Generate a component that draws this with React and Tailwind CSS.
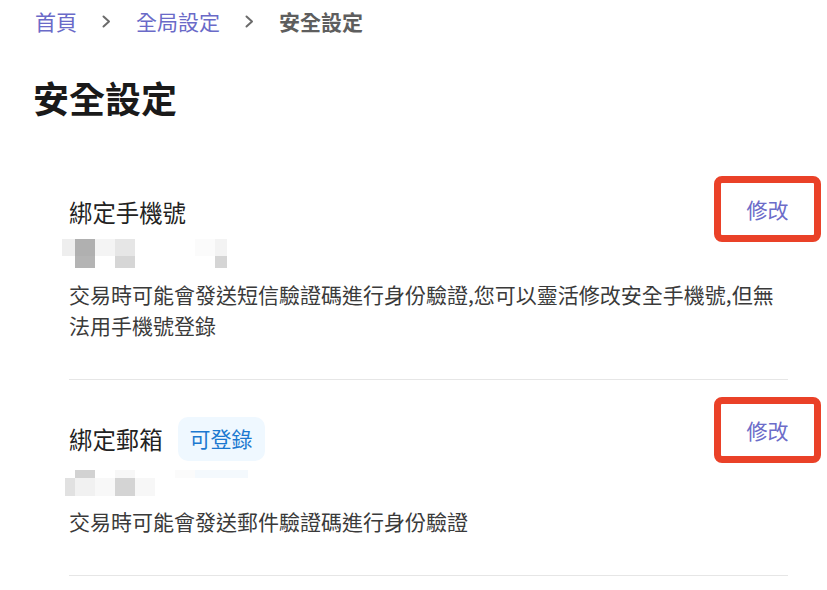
import React from "react";

const font = { fontFamily: '"Noto Sans CJK TC", "Noto Sans", sans-serif' };

function Chevron() {
  return (
    <svg width="9" height="13" viewBox="0 0 9 13" className="shrink-0">
      <path d="M1.5 1.5 L7 6.5 L1.5 11.5" fill="none" stroke="#6b6b6b" strokeWidth="2" strokeLinecap="round" strokeLinejoin="round" />
    </svg>
  );
}

function Blocks({ rows }) {
  return (
    <div className="flex flex-col">
      {rows.map((r, i) => (
        <div key={i} className="flex" style={{ height: r.h }}>
          {r.cells.map((c, j) => (
            <div key={j} style={{ width: c[0], background: c[1] }} />
          ))}
        </div>
      ))}
    </div>
  );
}

function EditButton({ className }) {
  return (
    <button
      className={
        "absolute right-[-33px] w-[107px] h-[66px] border-[7px] border-[#ea4128] rounded-[8px] bg-white flex items-center justify-center text-[21px] leading-none text-[#6c6cc9] " +
        className
      }
    >
      修改
    </button>
  );
}

export default function App() {
  const phoneBlocks = [
    {
      h: 17,
      cells: [
        [28, "#ffffff"],
        [13, "#eeeeee"],
        [20, "#b0b0b0"],
        [20, "#f4f4f4"],
        [20, "#e6e6e6"],
        [60, "#ffffff"],
        [20, "#fbfbfb"],
        [12, "#f3f3f3"],
      ],
    },
    {
      h: 12,
      cells: [
        [41, "#ffffff"],
        [20, "#b4b4b4"],
        [20, "#ffffff"],
        [20, "#d6d6d6"],
        [80, "#ffffff"],
        [12, "#d5d5d5"],
      ],
    },
  ];
  const mailBlocks = [
    {
      h: 8,
      cells: [
        [41, "#ffffff"],
        [20, "#d2d2d2"],
        [20, "#ffffff"],
        [20, "#f7f7f7"],
        [40, "#ffffff"],
        [20, "#fbfbfb"],
        [53, "#f4f9fd"],
      ],
    },
    {
      h: 18,
      cells: [
        [31, "#ffffff"],
        [10, "#e1e1e1"],
        [20, "#f1f1f1"],
        [20, "#f8f8f8"],
        [20, "#d4d4d4"],
        [20, "#f7f7f7"],
      ],
    },
  ];

  return (
    <div className="w-[827px] h-[590px] overflow-hidden bg-white" style={font}>
      <div className="pl-[35px]">
        <div className="h-[43px] flex items-center text-[21px] leading-none">
          <span className="text-[#6a6ac8]">首頁</span>
          <span className="mx-[25px] flex items-center"><Chevron /></span>
          <span className="text-[#6a6ac8]">全局設定</span>
          <span className="mx-[25px] flex items-center"><Chevron /></span>
          <span className="text-[#5e5e5e] font-bold">安全設定</span>
        </div>
        <h1 className="-ml-[2px] mt-[36px] h-[36px] text-[36px] leading-[36px] font-bold text-[#1a1a1a]">
          安全設定
        </h1>
      </div>

      <div className="ml-[69px] w-[719px]">
        {/* phone */}
        <div className="relative pt-[82px] pb-[38px] border-b border-[#e6e6e6]">
          <div className="h-[30px] text-[23.4px] leading-[30px] text-[#222]">綁定手機號</div>
          <div className="mt-[12px] -ml-[35px] h-[29px]">
            <Blocks rows={phoneBlocks} />
          </div>
          <p className="mt-[11px] text-[21px] leading-[31px] text-[#3a3a3a]">
            交易時可能會發送短信驗證碼進行身份驗證,您可以靈活修改安全手機號,但無法用手機號登錄
          </p>
          <EditButton className="top-[61px]" />
        </div>

        {/* email */}
        <div className="relative pt-[37px] pb-[38px] border-b border-[#e6e6e6]">
          <div className="h-[44px] flex items-center">
            <span className="text-[23.4px] leading-[30px] text-[#222]">綁定郵箱</span>
            <span className="ml-[15px] h-[44px] px-[12px] rounded-[10px] bg-[#eff8ff] text-[#1b78d0] text-[21px] flex items-center">
              可登錄
            </span>
          </div>
          <div className="mt-[9px] -ml-[35px] h-[26px]">
            <Blocks rows={mailBlocks} />
          </div>
          <p className="mt-[10px] text-[21px] leading-[31px] text-[#3a3a3a]">
            交易時可能會發送郵件驗證碼進行身份驗證
          </p>
          <EditButton className="top-[17px]" />
        </div>
      </div>
    </div>
  );
}
